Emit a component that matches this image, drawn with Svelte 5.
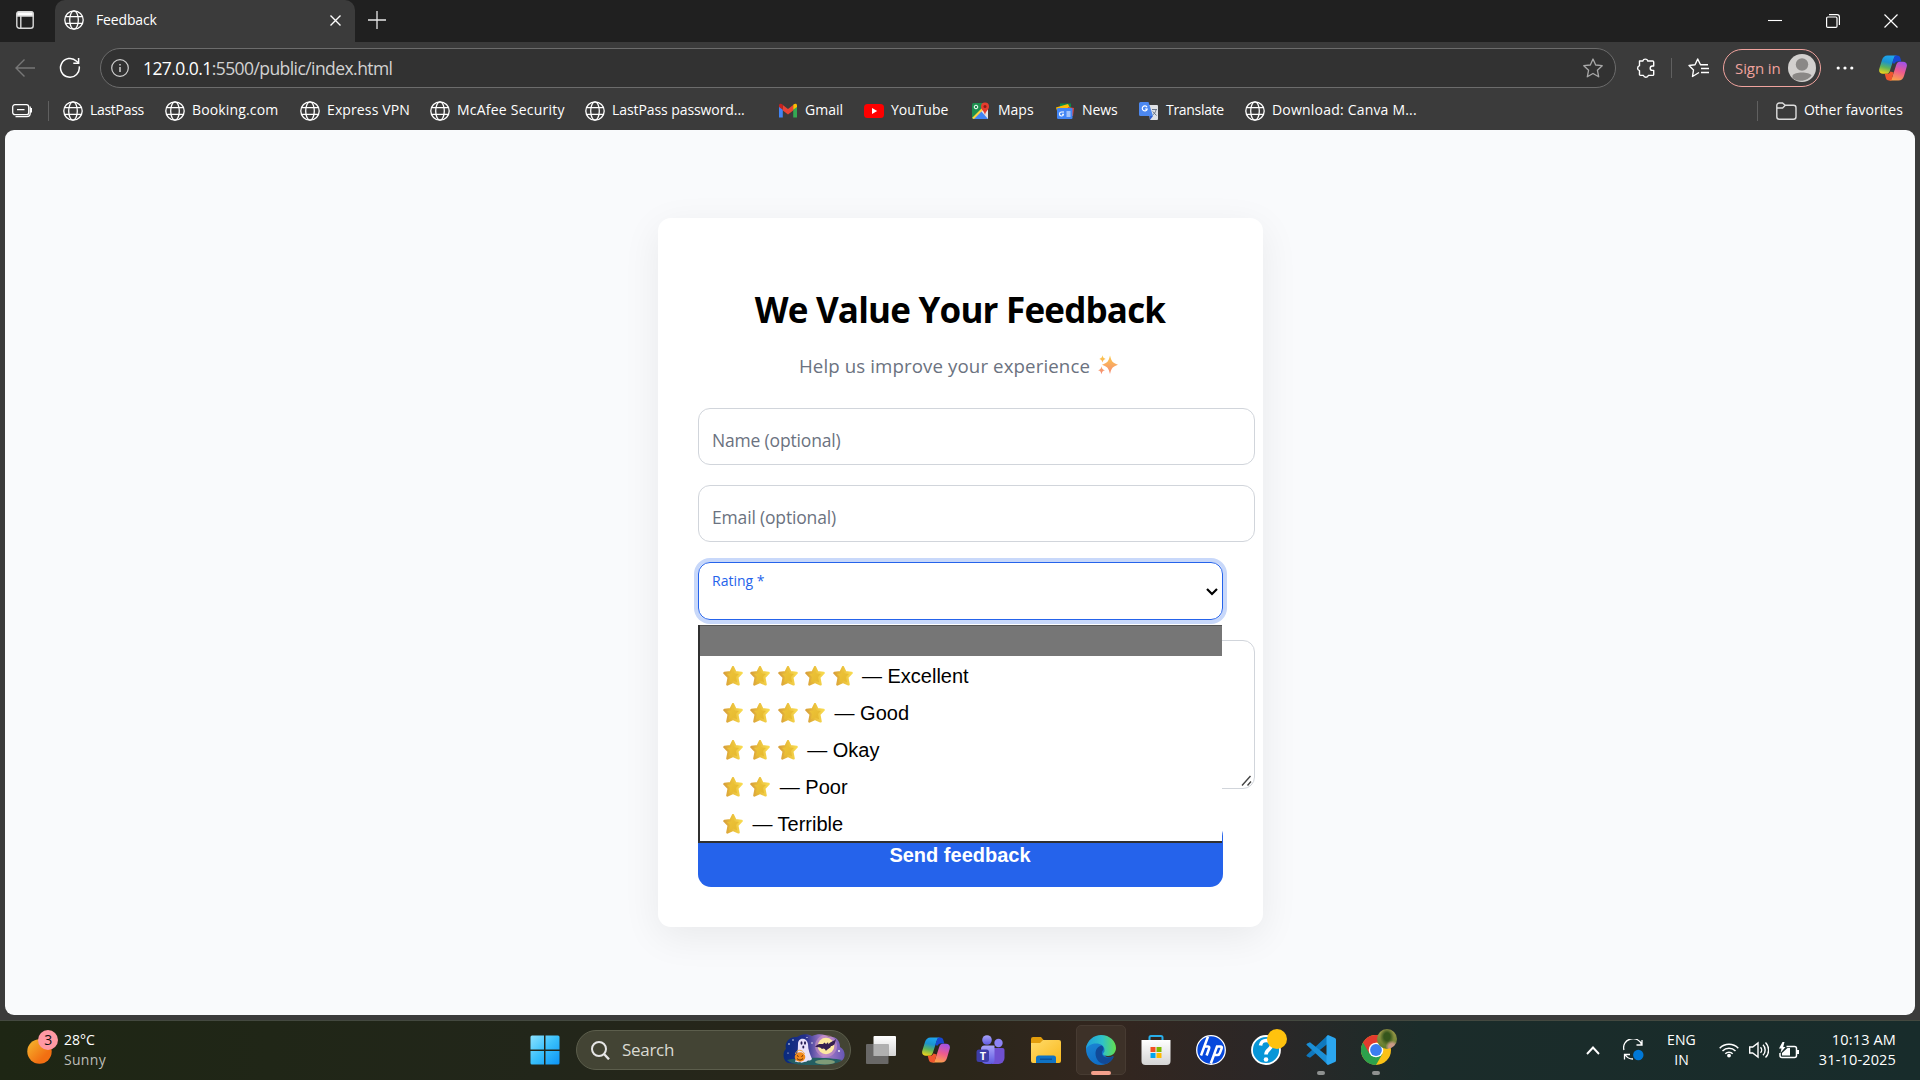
<script>
  const bookmarks = [
    { label: 'LastPass', icon: 'globe', slot: 102, track: -0.3 },
    { label: 'Booking.com', icon: 'globe', slot: 135, track: 0.15 },
    { label: 'Express VPN', icon: 'globe', slot: 130, track: 0.12 },
    { label: 'McAfee Security', icon: 'globe', slot: 155, track: 0.22 },
    { label: 'LastPass password...', icon: 'globe', slot: 193, track: -0.08 },
    { label: 'Gmail', icon: 'gmail', slot: 86, track: 0 },
    { label: 'YouTube', icon: 'youtube', slot: 107, track: -0.05 },
    { label: 'Maps', icon: 'maps', slot: 84, track: 0 },
    { label: 'News', icon: 'news', slot: 84, track: -0.1 },
    { label: 'Translate', icon: 'translate', slot: 106, track: -0.3 },
    { label: 'Download: Canva M...', icon: 'globe', slot: 180, track: 0.2 }
  ];
  const ratings = [
    { stars: 5, label: 'Excellent' },
    { stars: 4, label: 'Good' },
    { stars: 3, label: 'Okay' },
    { stars: 2, label: 'Poor' },
    { stars: 1, label: 'Terrible' }
  ];
</script>

{#snippet globe()}
  <svg width="20" height="20" viewBox="0 0 20 20" fill="none" stroke="#fff" stroke-width="1.3">
    <circle cx="10" cy="10" r="9.2" /><ellipse cx="10" cy="10" rx="4.3" ry="9.2" />
    <path d="M1.6 6.7h16.8M1.6 13.3h16.8" />
  </svg>
{/snippet}

{#snippet copilot()}
  <svg width="28" height="26" viewBox="0 0 28 26">
    <path d="M8.500.5H18c-1.800.4-2.800 1.700-3.400 3.700L10.800 16c-.8 2-1.800 2.800-3.600 2.800H4c-3 0-4.500-2-3.700-5L3 5C4 2 5.700.5 8.500.5z" fill="url(#cpA)" />
    <path d="M16 .5h2.200c2 0 2.800 1.200 3.300 3l.9 3h-3c-2 0-3 .6-4 2.300L13.200 8l1.300-3.800C15 2.500 15.500 1.300 16 .5z" fill="#1747d2" />
    <path d="M19.500 25.500H10c1.800-.4 2.800-1.700 3.400-3.700L17.200 10c.8-2.200 1.800-3.200 3.600-3.200H24c3 0 4.500 2 3.700 5L25 21c-1 3-2.700 4.500-5.500 4.500z" fill="url(#cpB)" />
    <path d="M12.500 25.500H10c-2 0-2.800-1.200-3.300-3l-1-3.700h2.500c1.600 0 2.600-.6 3.300-2.300l3.200 1-1.300 4.300c-.5 1.800-.8 2.900-.9 3.700z" fill="#f0562e" />
  </svg>
{/snippet}

{#snippet star()}
  <svg class="star" width="20" height="20" viewBox="0 0 20 20">
    <path d="M10 1.200l2.400 5 6.200.8-4.300 4.400 1.300 7L10 15.800l-5.600 2.600 1.300-7L1.400 7l6.200-.8z" fill="url(#starFill)" stroke="url(#starEdge)" stroke-width="2.400" stroke-linejoin="round" />
  </svg>
{/snippet}

<svg class="defs" width="0" height="0" aria-hidden="true">
  <defs>
    <linearGradient id="cpA" x1="0.5" y1="0" x2="0.250" y2="1"><stop offset="0" stop-color="#1ea5ee" /><stop offset=".35" stop-color="#1c93cf" /><stop offset=".65" stop-color="#5fb45a" /><stop offset="1" stop-color="#f3d51a" /></linearGradient>
    <linearGradient id="cpB" x1="0.700" y1="0" x2="0.400" y2="1"><stop offset="0" stop-color="#a152e8" /><stop offset=".5" stop-color="#ee5a8e" /><stop offset="1" stop-color="#fba24a" /></linearGradient>
    <linearGradient id="starFill" x1="0" y1="0" x2="1" y2="1"><stop offset="0" stop-color="#f0c83c" /><stop offset="1" stop-color="#e3b52c" /></linearGradient>
    <linearGradient id="starEdge" x1="0" y1="0.500" x2="1" y2="0.400"><stop offset="0" stop-color="#d8a03c" /><stop offset=".4" stop-color="#e8bb38" /><stop offset="1" stop-color="#f8da50" /></linearGradient>
    <linearGradient id="spark" x1="0" y1="0" x2="0" y2="1"><stop offset="0" stop-color="#fcca4a" /><stop offset="1" stop-color="#f58a76" /></linearGradient>
    <linearGradient id="sun" x1="0" y1="0" x2="1" y2="1"><stop offset="0" stop-color="#f6bb2f" /><stop offset=".7" stop-color="#f26f12" /></linearGradient>
    <linearGradient id="win" x1="0" y1="0" x2="1" y2="1"><stop offset="0" stop-color="#8ce2ff" /><stop offset=".5" stop-color="#38bffb" /><stop offset="1" stop-color="#0c93f5" /></linearGradient>
    <linearGradient id="nightSky"><stop offset="0" stop-color="#082a7c" /><stop offset=".35" stop-color="#232f8c" /><stop offset=".65" stop-color="#b184cc" /><stop offset="1" stop-color="#6656b4" /></linearGradient>
    <linearGradient id="tv" x1="0" y1="0" x2="0" y2="1"><stop offset="0" stop-color="#fff" /><stop offset="1" stop-color="#d4d4d4" /></linearGradient>
    <linearGradient id="teams" x1="0" y1="0" x2="0" y2="1"><stop offset="0" stop-color="#a9a4fb" /><stop offset="1" stop-color="#5f5ae0" /></linearGradient>
    <linearGradient id="folder" x1="0" y1="0" x2="1" y2="1"><stop offset="0" stop-color="#ffdb6a" /><stop offset="1" stop-color="#f9b81c" /></linearGradient>
    <linearGradient id="edgeTop"><stop offset="0" stop-color="#1e9fdc" /><stop offset=".55" stop-color="#2fc2c8" /><stop offset="1" stop-color="#63e04e" /></linearGradient>
    <linearGradient id="edgeLow" x1="0" y1="0" x2="0.500" y2="1"><stop offset="0" stop-color="#1d88d6" /><stop offset="1" stop-color="#0f6cc4" /></linearGradient>
    <linearGradient id="code"><stop offset="0" stop-color="#1576bc" /><stop offset="1" stop-color="#2aa9f3" /></linearGradient>
  </defs>
</svg>

<div class="screen">
  <header class="tabs">
    <div class="workspace">
      <svg width="18" height="18" viewBox="0 0 18 18" fill="none" stroke="#d9d9d9" stroke-width="1.4"><rect x=".8" y=".8" width="16.400" height="16.400" rx="2.500" /><path d="M4.800 5v12" /><path d="M2.500 1h13a1.500 1.500 0 0 1 1.500 1.500V5H1V2.500A1.500 1.500 0 0 1 2.500 1z" fill="#fff" /></svg>
    </div>
    <div class="tab">
      {@render globe()}
      <span class="tab-title">Feedback</span>
      <svg width="11" height="11" viewBox="0 0 11 11" stroke="#fff" stroke-width="1.400"><path d="M.5.5l10 10M10.500.5l-10 10" /></svg>
    </div>
    <svg class="plus" width="18" height="18" viewBox="0 0 18 18" stroke="#e8e8e8" stroke-width="1.300"><path d="M9 0v18M0 9h18" /></svg>
    <div class="window-buttons">
      <svg width="14" height="14" viewBox="0 0 14 14" fill="none" stroke="#fff" stroke-width="1.100"><path d="M0 6.500h14" /></svg>
      <svg width="14" height="14" viewBox="0 0 14 14" fill="none" stroke="#fff" stroke-width="1.200"><rect x=".6" y="3" width="10.400" height="10.400" rx="1.200" /><path d="M3 .6h8a2.400 2.400 0 0 1 2.400 2.400v8" /></svg>
      <svg width="14" height="14" viewBox="0 0 14 14" stroke="#fff" stroke-width="1.200"><path d="M.5.5l13 13M13.500.5l-13 13" /></svg>
    </div>
  </header>

  <div class="toolbar">
    <svg class="back" width="20" height="18" viewBox="0 0 20 18" fill="none" stroke="#777" stroke-width="1.400"><path d="M20 9H1M9.500.5L1 9l8.500 8.500" /></svg>
    <svg class="reload" width="22" height="22" viewBox="0 0 22 22" fill="none" stroke="#fff" stroke-width="1.500"><path d="M20.200 9.300A9.400 9.400 0 1 1 17.600 4.200L19.500 6" /><path d="M19.600 1v5.300h-5.300" /></svg>
    <div class="address">
      <svg width="18" height="18" viewBox="0 0 18 18" fill="none" stroke="#d0d0d0" stroke-width="1.200"><circle cx="9" cy="9" r="8.300" /><path d="M9 8v5M9 5v1.500" stroke-width="1.500" /></svg>
      <span class="url"><b>127.0.0.1</b>:5500/public/index.html</span>
      <svg width="20" height="20" viewBox="0 0 20 20" fill="none" stroke="#a8a8a8" stroke-width="1.300" stroke-linejoin="round"><path d="M10 1l2.700 6 6.500.7-4.800 4.500 1.300 6.600L10 15.500l-5.700 3.300 1.300-6.600L.8 7.700l6.500-.7z" /></svg>
    </div>
    <svg class="puzzle" width="20" height="20" viewBox="0 0 20 20" fill="none" stroke="#fff" stroke-width="1.400" stroke-linejoin="round"><path d="M3.500 3h3.300a2.600 2.600 0 0 1 5 0h4.900a1 1 0 0 1 1 1v4h-1.300a2.200 2.200 0 0 0 0 4.400h1.300v4a1 1 0 0 1-1 1h-4.300a2.600 2.600 0 0 1-5 0H4.500a1 1 0 0 1-1-1v-3.700a2.600 2.600 0 0 1 0-5z" /></svg>
    <i class="rule"></i>
    <svg class="favs" width="21" height="20" viewBox="0 0 21 20" fill="none" stroke="#fff" stroke-width="1.400" stroke-linejoin="round"><path d="M11 14.500 4.500 18.500l1-6.500L1 7.500l6-.8L9.700 1l2.800 5.700H20M13 10.500h8M13 14.500h8" /></svg>
    <div class="signin">
      <span>Sign in</span>
      <svg width="28" height="28" viewBox="0 0 28 28"><circle cx="14" cy="14" r="14" fill="#d2d0ce" /><circle cx="14" cy="10.500" r="6.200" fill="#8a8886" /><path d="M4.500 21.500c2-4 17-4 19 0a14 14 0 0 1-19 2.800z" fill="#8a8886" /></svg>
    </div>
    <svg class="dots" width="18" height="4" viewBox="0 0 18 4" fill="#fff"><circle cx="2.200" cy="2" r="1.600" /><circle cx="9" cy="2" r="1.600" /><circle cx="15.800" cy="2" r="1.600" /></svg>
    {@render copilot()}
  </div>

  <nav class="bookmarks">
    <svg class="stack" width="20" height="14" viewBox="0 0 20 14" fill="none" stroke="#fff" stroke-width="1.300"><rect x=".7" y=".7" width="16" height="10" rx="2.200" /><path d="M5 5.700h7.500M18.200 2.500v6.800a3.300 3.300 0 0 1-3.300 3.300H3.500M19.500 4v4.500" /></svg>
    <i class="rule"></i>
    <div class="bookmark-list">
      {#each bookmarks as item}
        <div class="bookmark" style:width="{item.slot}px" style:letter-spacing="{item.track}px">
          {#if item.icon === 'globe'}
            {@render globe()}
          {:else if item.icon === 'gmail'}
            <svg width="20" height="20" viewBox="0 0 20 20"><path d="M1 5v11.500h3.800V8.500z" fill="#4285f4" /><path d="M19 5v11.500h-3.800V8.500z" fill="#34a853" /><path d="M4.800 9.500V4l5.200 4 5.200-4v5.500L10 13.500z" fill="#ea4335" /><path d="M1 6V4.500C1 2.500 3 2.300 4.800 3.700v5.100z" fill="#c5221f" /><path d="M19 6V4.500c0-2-2-2.200-3.800-.8v5.100z" fill="#fbbc04" /></svg>
          {:else if item.icon === 'youtube'}
            <svg width="20" height="20" viewBox="0 0 20 20"><rect y="3" width="20" height="14" rx="3.500" fill="#f00" /><path d="M8 7l5.200 3L8 13z" fill="#fff" /></svg>
          {:else if item.icon === 'maps'}
            <svg width="20" height="20" viewBox="0 0 20 20"><rect x="1" y="2" width="16" height="16" rx="1.500" fill="#1e8e4e" /><path d="M2 18 16 4l1 1v13z" fill="#e4e5e6" /><path d="M2 18l8-8 7 8z" fill="#4285f4" /><path d="M1 17 14 4l1.500 1.500L3 18z" fill="#fdd23e" /><path d="M14 14c-.5-4-4-5-4-8.500a4 4 0 0 1 8 0C18 9 14.500 10 14 14z" fill="#e53c2e" /><circle cx="14" cy="5.500" r="1.500" fill="#8c1d18" /><circle cx="5" cy="6" r="1.800" fill="none" stroke="#fff" /></svg>
          {:else if item.icon === 'news'}
            <svg width="20" height="20" viewBox="0 0 20 20"><path d="M5 2.500h11V9H5z" fill="#0c8a45" /><path d="M1 6.500l12-3.500 3 6-13 4z" fill="#fbbc04" /><path d="M13 6l6 1-1 8h-5z" fill="#ea4335" /><rect x="2" y="7" width="15.500" height="11" rx="1.200" fill="#4285f4" /><path d="M9 11H6.500a2 2 0 1 0 2 2.200H7M11.500 11h4M11.500 13h4M11.500 15h4" fill="none" stroke="#fff" stroke-width="1.100" /></svg>
          {:else}
            <svg width="20" height="20" viewBox="0 0 20 20"><path d="M9 4h9a1 1 0 0 1 1 1v13a1 1 0 0 1-1 1h-7z" fill="#dfe1e5" /><path d="M1.500 1h8L14 15H1.500A1.500 1.500 0 0 1 0 13.500v-11A1.500 1.500 0 0 1 1.500 1z" fill="#4c88f0" /><path d="M8 6.300A2.500 2.500 0 1 0 8.200 8H6" fill="none" stroke="#fff" stroke-width="1.200" /><path d="M13 8.500h5M17 9c-.5 2.500-2 4-3.200 5M13.800 10.500l3.700 4" fill="none" stroke="#687487" stroke-width="1" /><path d="M10.500 15H14l-3 4z" fill="#2f5fd0" /></svg>
          {/if}
          <span>{item.label}</span>
        </div>
      {/each}
    </div>
    <i class="rule last"></i>
    <svg class="other" width="21" height="18" viewBox="0 0 21 18" fill="none" stroke="#ddd" stroke-width="1.400"><path d="M.8 3.500A2.500 2.500 0 0 1 3.300 1h3.200l2.800 2.300h8.200A2.500 2.500 0 0 1 20 5.800v9a2.500 2.500 0 0 1-2.500 2.500H3.300A2.500 2.500 0 0 1 .8 14.800zM.8 6h5.800l2.700-2.700" /></svg>
    <span class="other-label">Other favorites</span>
  </nav>

  <main class="page">
    <section class="card">
      <h1>We Value Your Feedback</h1>
      <p class="lead">
        <span>Help us improve your experience</span>
        <svg width="20" height="20" viewBox="0 0 20 20" fill="url(#spark)"><path d="M12 .5c1.500 6 2.500 7.300 8 9.200-5.500 1.900-6.500 3.300-8 9.300-1.500-6-2.500-7.400-8-9.300C9.500 7.800 10.500 6.500 12 .5zM4.500.3c.6 2.400 1 3 3.200 3.600C5.500 4.600 5.100 5.200 4.500 7.500 3.900 5.200 3.500 4.600 1.300 3.900 3.500 3.300 3.900 2.700 4.500.3zM3.500 11.200c.7 2.700 1 3.200 3.500 4-2.500.8-2.800 1.400-3.500 4.100-.7-2.700-1-3.300-3.500-4.100 2.500-.8 2.800-1.300 3.500-4z" /></svg>
      </p>
      <div class="field wide">Name (optional)</div>
      <div class="field wide">Email (optional)</div>
      <div class="field select">
        <span>Rating *</span>
        <svg width="12" height="8" viewBox="0 0 12 8" fill="none" stroke="#000" stroke-width="2.200"><path d="M1 1l5 5 5-5" /></svg>
        <div class="options">
          <div class="blank"></div>
          {#each ratings as rating}
            <div class="option">
              {#each Array(rating.stars) as _}{@render star()}{/each}
              <span>— {rating.label}</span>
            </div>
          {/each}
        </div>
      </div>
      <div class="message wide">
        <svg width="12" height="12" viewBox="0 0 12 12" stroke="#444" stroke-width="1.400"><path d="M1 10.500 9.500 1M6.500 10.500l3.500-4" /></svg>
      </div>
      <div class="send">Send feedback</div>
    </section>
  </main>

  <footer class="taskbar">
    <div class="weather">
      <svg width="32" height="34" viewBox="0 0 32 34"><circle cx="12.500" cy="21.500" r="12.200" fill="url(#sun)" /><circle cx="21" cy="10" r="10" fill="#ff99a4" /><text x="21" y="15.300" text-anchor="middle" class="count">3</text></svg>
      <div class="weather-text"><span>28°C</span><span class="dim">Sunny</span></div>
    </div>
    <svg class="start" width="30" height="30" viewBox="0 0 30 30" fill="url(#win)"><path d="M2 .5h12v14H.5V2A1.500 1.500 0 0 1 2 .5zM15.500.5H28A1.500 1.500 0 0 1 29.500 2v12.500h-14zM.5 16H14v13.500H2A1.500 1.500 0 0 1 .5 28zM15.500 16h14v12a1.500 1.500 0 0 1-1.500 1.500H15.500z" /></svg>
    <div class="search">
      <svg width="19" height="19" viewBox="0 0 19 19" fill="none" stroke="#e6e6e6" stroke-width="2"><circle cx="8" cy="8" r="7" /><path d="M13 13l5 5.300" stroke-width="2.400" /></svg>
      <span>Search</span>
      <svg width="62" height="32" viewBox="0 0 62 32">
        <path d="M5 29C0 27-1 18 3 15 1 8 7 2 14 3c4-3 10-4 15-1 6-3 13-2 17 1 7-1 11 4 11 10 6 3 6 12 1 14-12 4-40 4-53 2z" fill="url(#nightSky)" />
        <path d="M4 26c12-3 42-3 55 0-4 4-14 5-27 5S10 31 4 26z" fill="#245f62" />
        <ellipse cx="42" cy="28" rx="10" ry="2.500" fill="#7e9c78" />
        <circle cx="43" cy="12" r="11" fill="#d69ac4" opacity=".5" /><circle cx="43" cy="12" r="8.300" fill="#fde9a0" />
        <path d="M32 13c3-4 6-3 8-3l1.500-1.500L43 10l2-1.800.5 2C48 7 50 8 53 5c-1 5-2 7-5 7-1 3-3 2-5 5-1-3-3-3-4-2-2-2-4-2-7-2z" fill="#35204f" />
        <path d="M15 10c0-7 9-7 10 0 0 6 2 10 4 15-2 3-4 0-6 3-2-1-4 2-6 0-2 1-4-1-5 0 2-6 3-11 3-18z" fill="#e9e2fb" />
        <ellipse cx="18.500" cy="9" rx="1" ry="1.700" fill="#241b55" /><ellipse cx="22" cy="9" rx="1" ry="1.700" fill="#241b55" /><ellipse cx="20.300" cy="13" rx="1" ry="1.500" fill="#241b55" />
        <path d="M12.500 20c1-5 7-5 9 0" fill="none" stroke="#f6a93c" /><ellipse cx="17" cy="23" rx="5.300" ry="4.700" fill="#f28a1c" /><path d="M14 21.500l1.500 1M20 21.500l-1.500 1M14 24.500c2 2 4 2 6 0" stroke="#5c2508" fill="none" />
        <g fill="#fff"><circle cx="6" cy="10" r=".8" /><circle cx="10" cy="6" r=".7" /><circle cx="24" cy="3.500" r=".6" /><circle cx="29" cy="9" r=".7" /><circle cx="56" cy="17" r=".9" /><circle cx="5" cy="19" r=".6" /></g>
      </svg>
    </div>
    <div class="apps">
      <div class="app"><svg width="30" height="28" viewBox="0 0 30 28"><rect x="7.500" width="22.500" height="20" rx="1" fill="url(#tv)" /><rect y="8" width="22.500" height="20" rx="1" fill="#707070" opacity=".9" /><rect x="7.500" y="8" width="15" height="12" fill="#b0b0b0" /></svg></div>
      <div class="app">{@render copilot()}</div>
      <div class="app"><svg width="30" height="30" viewBox="0 0 30 30"><circle cx="22.500" cy="8" r="4.200" fill="#8d83f5" /><path d="M16 13h10.500a2 2 0 0 1 2 2v8a6 6 0 0 1-6 6H16z" fill="#6f50d0" /><circle cx="11" cy="5" r="4.800" fill="url(#teams)" /><path d="M8.500 10.500h10V25a4 4 0 0 1-4 4H10a5 5 0 0 1-5-5V14a3.500 3.500 0 0 1 3.500-3.500z" fill="url(#teams)" /><rect x=".5" y="14.500" width="12.500" height="12.500" rx="2.500" fill="#3e3da6" /><text x="6.800" y="24.500" text-anchor="middle" class="tee">T</text></svg></div>
      <div class="app"><svg width="30" height="26" viewBox="0 0 30 26"><path d="M0 8V2a2 2 0 0 1 2-2h8l3 3.500h-1L9 7z" fill="#e29d0c" /><path d="M0 6h9l3-3h16a2 2 0 0 1 2 2v19a2 2 0 0 1-2 2H2a2 2 0 0 1-2-2z" fill="url(#folder)" /><path d="M5 26v-5a2.500 2.500 0 0 1 2.500-2.500h15A2.500 2.500 0 0 1 25 21v5z" fill="#0f72c4" /><path d="M9 22.200h12" stroke="#084a91" stroke-width="1.200" /></svg></div>
      <div class="app active"><svg width="30" height="30" viewBox="0 0 30 30"><path d="M0 14C0 8 5 4.500 12 4.500c6 0 9 4 8 9-1 1.500-2 3-2 5 0 3 4 4.500 7 3.500.8-.2 1.500-.8 2.500-.8C26 26 21 30 15 30 6 30 0 22 0 14z" fill="url(#edgeLow)" /><path d="M16 10.500c-4 .5-6.500 4-6.500 8 0 6 4.500 11 10.500 10.500 3-1 6-3.500 7.500-6.500.3-1-.5-1.200-1-.9-5 2.400-11.500.4-10.500-4.600.3-1.500 1.500-1.500 1.500-3 0-1.500-.5-2.500-1.500-3.500z" fill="#114a98" /><path d="M0 14C1 5 8 0 15 0c9 0 15 6.500 15 13 0 5-4 8-8 8-3 0-5-1-5-2 0-1 1.500-1.700 1.500-4C18.500 11 15 8.500 10 8.500 5 8.500 1.500 11 0 14z" fill="url(#edgeTop)" /></svg><i class="run"></i></div>
      <div class="app"><svg width="30" height="30" viewBox="0 0 30 30"><path d="M8.500 7V2.500A1.500 1.500 0 0 1 10 1h10a1.500 1.500 0 0 1 1.500 1.500V7" fill="none" stroke="#28aee9" stroke-width="2" /><path d="M.5 5h29v21a4 4 0 0 1-4 4h-21a4 4 0 0 1-4-4z" fill="url(#tv)" /><path d="M9.500 12h5v5h-5z" fill="#f25022" /><path d="M15.500 12h5v5h-5z" fill="#7fba00" /><path d="M9.500 18h5v5h-5z" fill="#00a4ef" /><path d="M15.500 18h5v5h-5z" fill="#ffb900" /></svg></div>
      <div class="app"><svg width="30" height="30" viewBox="0 0 30 30" fill="none"><circle cx="15" cy="15" r="14.300" fill="#0648dc" stroke="#fff" stroke-width="1.300" /><path d="M12 1.500 5 20.500M8.300 11.500h3.500q2 0 1.300 2l-2.500 7M14.800 28.500l6.200-17h3.500q1.800 0 1.200 1.800L23.900 18q-.7 2-2.500 2h-3.500" stroke="#fff" stroke-width="2.500" /></svg></div>
      <div class="app"><svg width="30" height="30" viewBox="0 0 30 30"><circle cx="15" cy="15" r="14" fill="#0796d8" stroke="#fff" stroke-width="1.800" /><path d="M9.500 10.500c.5-7 11.500-6.500 11 0-.3 4-5.500 4-5.500 9" fill="none" stroke="#fff" stroke-width="3.600" /><circle cx="15" cy="24.500" r="2.300" fill="#fff" /></svg><i class="alert"></i></div>
      <div class="app"><svg width="30" height="30" viewBox="0 0 30 30"><path d="M22 0v8.500L4 22.800 1.200 21.500a1.200 1.200 0 0 1 0-2z" fill="#0f78bd" /><path d="M22 30v-8.500L4 7.200 1.200 8.500a1.200 1.200 0 0 0 0 2z" fill="#1b8fd6" /><path d="M22 0l7 3a2 2 0 0 1 1 1.800v20.400a2 2 0 0 1-1 1.800l-7 3-1.500-1.500V1.500z" fill="#2ba6ef" /></svg><i class="run idle"></i></div>
      <div class="app"><svg width="30" height="30" viewBox="0 0 30 30"><circle cx="15" cy="15" r="15" fill="#fbc116" /><path d="M15 15 2 7.500A15 15 0 0 0 15 30l6.500-11.300z" fill="#2da04c" /><path d="M2 7.500A15 15 0 0 1 28 7.500H15L8.500 18.700z" fill="#e33b2e" /><circle cx="15" cy="15" r="7.300" fill="#fff" /><circle cx="15" cy="15" r="5.900" fill="#3c7ef0" /></svg><i class="avatar"></i><i class="run idle"></i></div>
    </div>
    <div class="tray">
      <svg class="chev" width="14" height="9" viewBox="0 0 14 9" fill="none" stroke="#fff" stroke-width="1.900"><path d="M1 8l6-6.500L13 8" /></svg>
      <svg class="sync" width="21" height="22" viewBox="0 0 21 22" fill="none" stroke="#fff" stroke-width="1.300"><path d="M1 11A9 8.500 0 0 1 19 6M19 1v5h-5.500M10 20A9 8.500 0 0 1 2 15.500M1.500 20.500v-5H7" /><circle cx="15.300" cy="16" r="5.200" fill="#0078d7" stroke="none" /></svg>
      <div class="lang"><span>ENG</span><span>IN</span></div>
      <svg class="wifi" width="20" height="16" viewBox="0 0 20 16" fill="none" stroke="#fff" stroke-width="1.500"><path d="M.7 6.200a13.200 13.200 0 0 1 18.600 0M3.500 9a9.200 9.200 0 0 1 13 0M6.300 11.800a5.200 5.200 0 0 1 7.400 0" /><circle cx="10" cy="13.600" r="1.900" fill="#fff" stroke="none" /></svg>
      <svg class="sound" width="20" height="18" viewBox="0 0 20 18" fill="none" stroke="#fff" stroke-width="1.400"><path d="M.7 6v6h3L9 16V2L3.700 6zM11.500 6.200a4 4 0 0 1 0 5.600M14 3.800a7.300 7.300 0 0 1 0 10.400M16.500 1.500a10.600 10.600 0 0 1 0 15" /></svg>
      <svg class="battery" width="20" height="17" viewBox="0 0 20 17" fill="none" stroke="#fff" stroke-width="1.500"><path d="M7.500 4.500h8a2 2 0 0 1 2 2v7a2 2 0 0 1-2 2H3a2 2 0 0 1-2-2V11" /><path d="M3 13.500V11l5.500-5H11v7.500z" fill="#fff" stroke="none" /><path d="M3.500 0 0 6.500h2.500L1.500 11l5-6H4.200L5.500 0z" fill="#fff" stroke="none" /><path d="M19 8v4" stroke-width="2" /></svg>
      <div class="clock"><span>10:13 AM</span><span>31-10-2025</span></div>
    </div>
  </footer>
</div>

<style>
  :global(body) { margin: 0; background: #3b3b3b; overflow: hidden; }
  .screen { width: 1920px; height: 1080px; display: flex; flex-direction: column; background: #3b3b3b; color: #fff; font-family: 'Open Sans', 'Noto Sans', sans-serif; font-size: 14px; letter-spacing: -0.3px; overflow: hidden; white-space: nowrap; }
  .screen :global(*) { box-sizing: border-box; }
  .defs { position: absolute; }
  svg { display: block; flex: none; }

  .tabs { height: 42px; flex: none; display: flex; background: #202020; }
  .workspace { width: 55px; padding: 11px 0 0 16px; }
  .tab { width: 300px; display: flex; align-items: center; padding: 0 14px 2px 9px; background: #3b3b3b; border-radius: 10px 10px 0 0; }
  .tab-title { flex: 1; margin-left: 12px; padding-bottom: 2px; letter-spacing: -0.15px; }
  .plus { margin: 11px 0 0 13px; }
  .window-buttons { margin: 14px 22px 0 auto; display: flex; gap: 44px; }

  .toolbar { height: 53px; flex: none; display: flex; align-items: center; padding: 0 13px 1px 15px; }
  .reload { margin-left: 24px; }
  .address { width: 1517px; height: 40px; margin-left: 19px; padding: 0 12px 0 10px; display: flex; align-items: center; border: 1px solid #6c6c6c; border-radius: 20px; background: #323232; }
  .url { flex: 1; margin-left: 14px; padding-bottom: 1px; font-size: 17.500px; letter-spacing: -0.57px; color: #d2d2d2; }
  .url b { color: #fff; font-weight: 400; }
  .puzzle { margin-left: 20px; }
  .rule { width: 1px; height: 20px; background: #606060; flex: none; }
  .puzzle + .rule { margin-left: 15px; }
  .favs { margin-left: 16px; }
  .signin { width: 98px; height: 38px; margin-left: 14px; padding: 0 4px 0 11px; display: flex; align-items: center; justify-content: space-between; border: 1.500px solid #f0a39e; border-radius: 19px; color: #f0a39e; font-size: 15px; letter-spacing: -0.1px; }
  .signin span { padding-bottom: 1px; }
  .dots { margin: 0 25px 0 15px; }

  .bookmarks { height: 35px; flex: none; display: flex; align-items: center; padding: 0 17px 4px 12px; }
  .stack + .rule { margin: 0 14px 0 16px; }
  .bookmark-list { flex: 1; display: flex; }
  .bookmark { display: flex; align-items: center; gap: 7px; flex: none; }
  .bookmark span, .other-label { padding-bottom: 2px; }
  .other { margin: 0 7px 0 18px; }
  .other-label { letter-spacing: 0.05px; }

  .page { height: 885px; flex: none; margin: 0 5px; padding-top: 88px; border-radius: 9px; background: #f9fafc; }
  .card { width: 605px; height: 709px; margin: 0 auto; padding: 66px 40px 0; border-radius: 13px; background: #fff; box-shadow: 0 10px 38px rgba(0, 0, 0, .07); color: #6b7280; }
  h1 { height: 50px; margin: 0; color: #000; font-size: 35px; line-height: 51px; font-weight: 700; letter-spacing: -0.8px; text-align: center; }
  .lead { height: 30px; margin: 17px 0 27px; padding: 0 3px 2px 0; display: flex; justify-content: center; align-items: center; gap: 8px; font-size: 18.700px; letter-spacing: 0.1px; }
  .wide { width: 557px; }
  .field { height: 57px; margin-bottom: 20px; padding: 7px 14px 0 13.500px; display: flex; align-items: center; border: 1px solid #d1d5db; border-radius: 12px; font-size: 17.500px; letter-spacing: -0.17px; }
  .select { position: relative; width: 525px; height: 58px; padding: 0 4px 22px 13.500px; justify-content: space-between; border-color: #2563eb; box-shadow: 0 0 0 4px #c8d8fa; color: #2563eb; font-size: 14px; letter-spacing: 0; }
  .select > svg { margin-top: 24px; }
  .options { position: absolute; left: -1px; top: 62px; width: 524px; height: 218px; border: solid #303030; border-width: 0 0 2px 2px; background: #fff; color: #000; }
  .blank { height: 31px; background: #767676; border-top: 1px solid #555; margin-bottom: 1px; }
  .option { height: 37px; display: flex; align-items: center; padding: 1px 0 0 23.500px; gap: 7.400px; font: 20px 'Liberation Sans', Arial, sans-serif; letter-spacing: 0; }
  .option span { margin-left: 2px; }
  .message { height: 149px; display: flex; align-items: flex-end; justify-content: flex-end; padding: 0 1px 1px 0; border: 1px solid #d1d5db; border-radius: 12px; }
  .send { height: 64px; margin-top: 34px; border-radius: 13px; background: #2563eb; color: #fff; font: 700 20px/64px 'Liberation Sans', Arial, sans-serif; letter-spacing: 0; text-align: center; }

  .taskbar { height: 60px; margin-top: 5px; padding-bottom: 1px; flex: none; display: flex; align-items: center; border-top: 1px solid #444940; background: linear-gradient(90deg, #1e2614 0, #22261a 28%, #2b261a 50%, #33261f 58%, #2b2727 66%, #1b2c2a 74%, #182c2b 100%); }
  .weather { width: 530px; padding-left: 27px; display: flex; align-items: center; }
  .weather > svg { margin-top: -7px; }
  .count { font: 14px 'Open Sans', sans-serif; fill: #111; }
  .tee { font: 700 11px 'Open Sans', sans-serif; fill: #fff; }
  .weather-text { margin-left: 5px; }
  .weather-text span { display: block; line-height: 20px; letter-spacing: 0; }
  .weather-text .dim { color: #bdbdb8; letter-spacing: 0.3px; }
  .search { width: 275px; height: 40px; margin-left: 16px; padding: 0 5px 0 14px; display: flex; align-items: center; border: 1px solid #5c5e4c; border-radius: 20px; background: #434434; color: #dadad2; font-size: 17px; }
  .search span { flex: 1; margin-left: 12px; padding-bottom: 1px; }
  .apps { margin-left: 5px; display: flex; gap: 5px; }
  .app { width: 50px; height: 50px; display: flex; align-items: center; justify-content: center; position: relative; border-radius: 5px; }
  .active { background: #3d3128; border: 1px solid #473b32; }
  .run { position: absolute; left: 15px; bottom: 0; width: 20px; height: 4px; border-radius: 2px; background: #f5a08c; }
  .active .run { left: 14px; bottom: -1px; }
  .idle { left: 21px; width: 8px; background: #8e9190; }
  .alert { position: absolute; left: 26px; top: 4px; width: 20px; height: 20px; border-radius: 50%; background: #ffc20e; }
  .avatar { position: absolute; left: 26px; top: 4px; width: 20px; height: 20px; border-radius: 50%; background: radial-gradient(circle at 75% 90%, #c99a86 0 14%, transparent 28%), radial-gradient(ellipse at 50% 38%, #35551c 0 22%, transparent 50%), linear-gradient(#a09a4a, #5c7a2c); }
  .tray { flex: 1; display: flex; align-items: center; }
  .chev { margin-left: 185px; }
  .sync { margin-left: 22.500px; }
  .lang { width: 50px; margin-left: 13px; text-align: center; letter-spacing: 0.1px; }
  .lang span, .clock span { display: block; line-height: 20px; }
  .wifi { margin-left: 12px; }
  .sound { margin-left: 10px; }
  .battery { margin-left: 10px; }
  .clock { margin: 0 24px 0 auto; text-align: right; font-size: 14.500px; letter-spacing: 0.15px; }
</style>
